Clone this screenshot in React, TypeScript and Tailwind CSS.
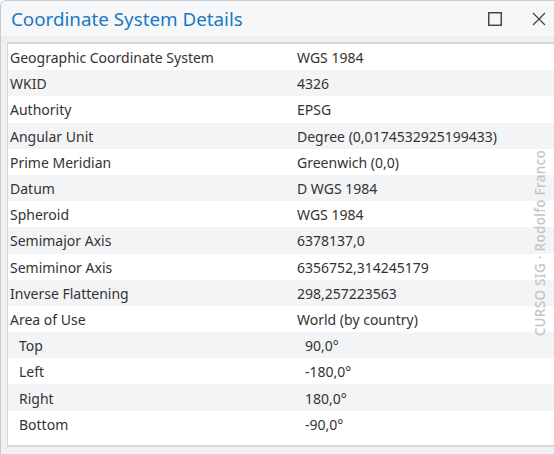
import React from 'react';

const rows: { label: string; value: string; sub?: boolean }[] = [
  { label: 'Geographic Coordinate System', value: 'WGS 1984' },
  { label: 'WKID', value: '4326' },
  { label: 'Authority', value: 'EPSG' },
  { label: 'Angular Unit', value: 'Degree (0,0174532925199433)' },
  { label: 'Prime Meridian', value: 'Greenwich (0,0)' },
  { label: 'Datum', value: 'D WGS 1984' },
  { label: 'Spheroid', value: 'WGS 1984' },
  { label: 'Semimajor Axis', value: '6378137,0' },
  { label: 'Semiminor Axis', value: '6356752,314245179' },
  { label: 'Inverse Flattening', value: '298,257223563' },
  { label: 'Area of Use', value: 'World (by country)' },
  { label: 'Top', value: '90,0°', sub: true },
  { label: 'Left', value: '-180,0°', sub: true },
  { label: 'Right', value: '180,0°', sub: true },
  { label: 'Bottom', value: '-90,0°', sub: true },
];

export default function App() {
  return (
    <div
      className="w-[554px] h-[454px] overflow-hidden bg-[#f0f1f2] border-t border-l border-[#c9cacb] rounded-tl-[6px] flex flex-col"
      style={{ fontFamily: '"Noto Sans", "Open Sans", sans-serif' }}
    >
      {/* Title bar */}
      <div className="h-[35px] shrink-0 bg-[#f6f7f8] flex items-center pl-[10px] pr-[8px] pt-[1px]">
        <h1 className="text-[18.8px] text-[#1b78c4] leading-none flex-1">
          Coordinate System Details
        </h1>
        <div className="flex items-center gap-[30px]">
          <svg width="14" height="14" viewBox="0 0 14 14" className="text-[#3c3c3c]">
            <rect x="0.75" y="0.75" width="12.5" height="12.5" fill="none" stroke="currentColor" strokeWidth="1.4" />
          </svg>
          <svg width="14" height="14" viewBox="0 0 14 14" className="text-[#3c3c3c]">
            <path d="M1 1 L13 13 M13 1 L1 13" stroke="currentColor" strokeWidth="1.1" fill="none" />
          </svg>
        </div>
      </div>

      <div className="h-[6px] shrink-0 bg-[#eeeff0]" />

      {/* Details table */}
      <div className="relative ml-[6px] h-[405px] shrink-0 bg-white border-t-2 border-l border-b-2 border-[#d6d7d8]">
        {rows.map((r, i) => (
          <div
            key={r.label}
            className={`h-[26.2px] pt-[1px] flex items-center text-[14px] text-[#333] ${i % 2 === 1 ? 'bg-[#f3f4f6]' : 'bg-white'}`}
          >
            <span className={`w-[289px] shrink-0 ${r.sub ? 'pl-[11px]' : 'pl-[2px]'}`}>{r.label}</span>
            <span className={r.sub ? 'pl-[8px]' : ''}>{r.value}</span>
          </div>
        ))}

        {/* watermark */}
        <div className="absolute left-[522px] top-[104px] w-[20px] h-[190px] flex items-center justify-center pointer-events-none">
          <span className="-rotate-90 whitespace-nowrap text-[13.5px] font-medium text-[#c4c4c4] tracking-[0.3px]">
            CURSO SIG · Rodolfo Franco
          </span>
        </div>
      </div>
    </div>
  );
}
